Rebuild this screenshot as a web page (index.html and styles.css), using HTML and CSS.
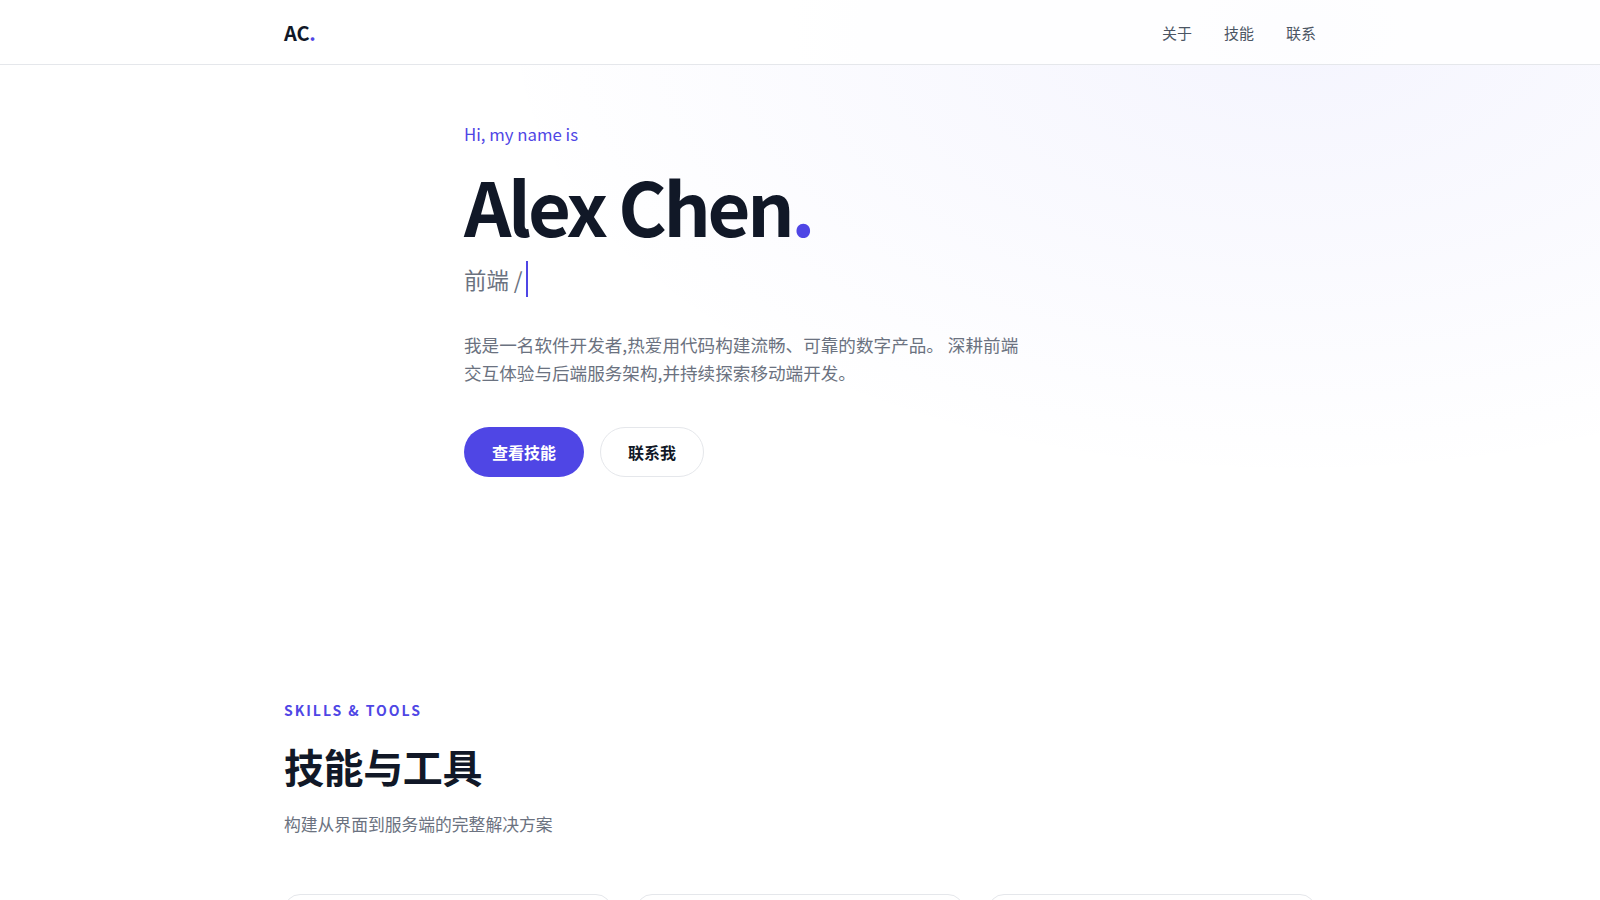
FILE: index.html
```html
<!DOCTYPE html>
<html lang="zh-CN">
<head>
<meta charset="utf-8">
<title>Alex Chen</title>
<link rel="stylesheet" href="styles.css">
</head>
<body>
<div class="top">
  <header class="nav">
    <div class="container nav-inner">
      <a class="logo" href="#">AC<span class="dot">.</span></a>
      <nav class="links">
        <a href="#about">关于</a>
        <a href="#skills">技能</a>
        <a href="#contact">联系</a>
      </nav>
    </div>
  </header>
  <section class="hero" id="about">
    <div class="hero-inner">
      <p class="hi">Hi, my name is</p>
      <h1 class="name">Alex Chen<span class="dot">.</span></h1>
      <p class="role">前端 /<span class="cursor"></span></p>
      <p class="intro">我是一名软件开发者,热爱用代码构建流畅、可靠的数字产品。 深耕前端交互体验与后端服务架构,并持续探索移动端开发。</p>
      <div class="actions">
        <a class="btn btn-primary" href="#skills">查看技能</a>
        <a class="btn btn-ghost" href="#contact">联系我</a>
      </div>
    </div>
  </section>
</div>
<section class="skills" id="skills">
  <div class="container">
    <p class="eyebrow">SKILLS &amp; TOOLS</p>
    <h2 class="section-title">技能与工具</h2>
    <p class="section-sub">构建从界面到服务端的完整解决方案</p>
    <div class="cards">
      <div class="card"></div>
      <div class="card"></div>
      <div class="card"></div>
    </div>
  </div>
</section>
</body>
</html>
```
FILE: styles.css
```css
* { box-sizing: border-box; }
html, body { margin: 0; padding: 0; }
body {
  font-family: "Noto Sans CJK SC", "Noto Sans", sans-serif;
  color: #111827;
  background: #ffffff;
}
a { text-decoration: none; color: inherit; }
p, h1, h2 { margin: 0; }

.container {
  max-width: 1100px;
  margin: 0 auto;
  padding: 0 34px;
}

.top {
  background:
    radial-gradient(ellipse 800px 450px at 81% 5%, rgba(99, 102, 241, 0.065), rgba(99, 102, 241, 0.034) 50%, rgba(255, 255, 255, 0) 100%);
}

.nav {
  height: 65px;
  background: rgba(255, 255, 255, 0.82);
  border-bottom: 1px solid #e5e7eb;
}
.nav-inner {
  height: 100%;
  display: flex;
  align-items: center;
  justify-content: space-between;
}
.logo {
  font-size: 20px;
  font-weight: 700;
  color: #111827;
  letter-spacing: -0.01em;
}
.dot { color: #4f46e5; }
.links {
  display: flex;
  gap: 32px;
}
.links a {
  font-size: 15px;
  color: #4b5563;
}

.hero {
  padding: 56px 0 127px;
}
.hero-inner {
  max-width: 672px;
  margin: 0 auto;
}
.hi {
  font-size: 16.8px;
  line-height: 26px;
  color: #4f46e5;
  margin-bottom: 16px;
}
.name {
  font-size: 74px;
  line-height: 84px;
  font-weight: 700;
  letter-spacing: -0.045em;
  color: #111827;
}
.name .dot {
  letter-spacing: 0;
}
.role {
  margin-top: 14px;
  font-size: 22.4px;
  line-height: 36px;
  color: #6b7280;
  display: flex;
  align-items: center;
}
.cursor {
  display: inline-block;
  width: 2px;
  height: 36px;
  margin-left: 3px;
  background: #4f46e5;
}
.intro {
  margin-top: 34px;
  max-width: 560px;
  font-size: 17.6px;
  line-height: 27.5px;
  color: #6b7280;
}
.actions {
  margin-top: 41px;
  display: flex;
  gap: 16px;
}
.btn {
  display: inline-block;
  font-size: 16px;
  line-height: 24px;
  font-weight: 700;
  padding: 13px 28px;
  border-radius: 999px;
}
.btn-primary {
  background: #4f46e5;
  color: #ffffff;
}
.btn-ghost {
  background: #ffffff;
  color: #111827;
  border: 1px solid #e5e7eb;
  padding: 12px 27px;
}

.skills {
  padding: 96px 0 0;
}
.eyebrow {
  font-size: 14px;
  line-height: 20px;
  font-weight: 700;
  letter-spacing: 0.14em;
  color: #4f46e5;
}
.section-title {
  margin-top: 22px;
  font-size: 40px;
  line-height: 48px;
  font-weight: 700;
  letter-spacing: -0.01em;
  color: #111827;
}
.section-sub {
  margin-top: 21px;
  font-size: 16.8px;
  line-height: 26px;
  color: #6b7280;
}
.cards {
  margin-top: 57px;
  display: grid;
  grid-template-columns: repeat(3, 1fr);
  gap: 24px;
}
.card {
  height: 220px;
  border: 1px solid #e5e7eb;
  border-radius: 16px;
  background: #ffffff;
}
```
